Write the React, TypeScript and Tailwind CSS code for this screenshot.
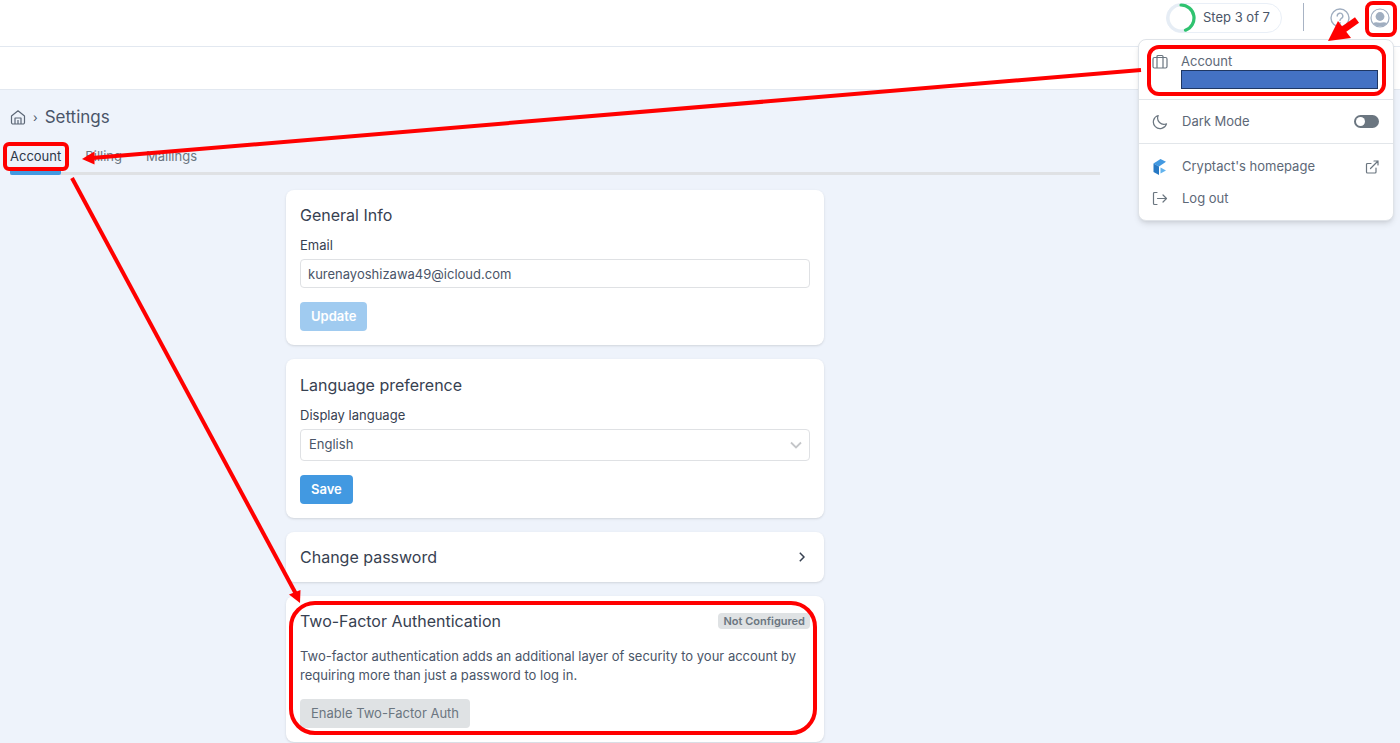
import type { ReactNode } from "react"

export default function App() {
  return (
    <div className="relative min-h-screen overflow-hidden bg-[#eef3fb] font-['Inter','Liberation_Sans',sans-serif] text-[13px] text-[#4a5568]">
      <Header />
      <main className="pt-4 pr-[300px] pl-2.5">
        <Breadcrumb />
        <Tabs />
        <div className="mx-auto mt-[15px] flex max-w-[538px] flex-col gap-3.5">
          <GeneralInfo />
          <LanguagePreference />
          <ChangePassword />
          <TwoFactor />
        </div>
      </main>
      <Arrows />
    </div>
  )
}

function Highlight({ className }: { className: string }) {
  return <span className={`pointer-events-none absolute z-20 border-4 border-[#ff0000] ${className}`} />
}

function Header() {
  return (
    <header>
      <div className="relative flex h-[47px] items-start justify-end border-b border-[#e2e8f0] bg-white pr-[3px]">
        <div className="mt-[3px] flex h-[30px] w-[116px] items-center rounded-full border border-[#e9eff7]">
          <svg className="-ml-px size-[30px]" viewBox="0 0 30 30" fill="none" strokeWidth="3.2">
            <circle cx="15" cy="15" r="13" stroke="#e6edf5" />
            <path d="M15 2a13 13 0 0 1 4.500 25.200" stroke="#2fc36f" strokeLinecap="round" />
          </svg>
          <span className="ml-[7px]">Step 3 of 7</span>
        </div>
        <span className="mt-[3px] ml-[21px] h-7 w-px bg-[#a8b3c4]" />
        <button type="button" aria-label="Help" className="mt-2 ml-[26px]">
          <svg className="size-5" viewBox="0 0 20 20" fill="none" stroke="#a0aec0" strokeWidth="1.4" strokeLinecap="round">
            <circle cx="10" cy="10" r="9" />
            <path d="M7.2 8a2.8 2.8 0 1 1 4.2 2.4c-1 .6-1.4 1-1.4 2" />
            <path d="M10 14.8v.1" strokeWidth="1.8" />
          </svg>
        </button>
        <button type="button" aria-label="User menu" className="relative mt-2 mr-[7px] ml-5">
          <svg className="size-5" viewBox="0 0 20 20">
            <circle cx="10" cy="10" r="9" fill="none" stroke="#a0aec0" strokeWidth="1.2" />
            <circle cx="10" cy="8.5" r="4.4" fill="#a0aec0" />
            <path d="M3 15.3c2-1.5 4-1 7-.6 3-.4 5-.9 7 .6-1.7 2.2-4 3.3-7 3.3s-5.3-1.1-7-3.3z" fill="#a0aec0" />
          </svg>
          <Highlight className="-top-[7px] -right-[7px] -bottom-[9px] -left-[5px] rounded-lg" />
        </button>
        <UserMenu />
      </div>
      <div className="h-[43px] border-b border-[#e2e8f0] bg-white" />
    </header>
  )
}

function UserMenu() {
  return (
    <div className="absolute top-[39px] right-1.5 z-10 w-[256px] rounded-lg border border-[#dfe3e8] bg-white text-[#5d6877] shadow-md">
      <div className="relative flex h-[60px] items-start border-b border-[#e2e6ea] pt-3 pr-[15px] pl-[13px]">
        <BriefcaseIcon />
        <div className="ml-[13px] flex-1">
          <a href="#account" className="block leading-[18px]">Account</a>
          <div className="h-[19px] border border-[#1f3763] bg-[#4472c4]" />
        </div>
        <Highlight className="top-[5px] right-[7px] bottom-[3px] left-2 rounded-xl" />
      </div>
      <div className="flex h-11 items-center border-b border-[#e2e6ea] pr-3.5 pl-[13px]">
        <svg className="size-4" viewBox="0 0 16 16" fill="none" stroke="#6b7680" strokeWidth="1.2" strokeLinejoin="round">
          <path d="M6.2 1.5a6.700 6.700 0 1 0 8.300 8.300A6.300 6.300 0 0 1 6.200 1.500z" />
        </svg>
        <label htmlFor="dark-mode" className="ml-3.5 flex-1">Dark Mode</label>
        <input
          id="dark-mode"
          type="checkbox"
          role="switch"
          className="h-[13px] w-[25px] appearance-none rounded-full border-2 border-[#6b7680] bg-[#6b7680] before:block before:size-[9px] before:rounded-full before:bg-white before:content-['']"
        />
      </div>
      <div className="pt-[7px] pb-[5px]">
        <a href="#homepage" className="flex h-8 items-center pr-3.5 pl-[13px]">
          <svg className="size-4" viewBox="0 0 16 16">
            <path d="M1.500 4.500 8.500 0l5.500 2.800-7 4.700z" fill="#4299e1" />
            <path d="M1.500 4.500 7 7.500V16l-5.500-3z" fill="#2779c4" />
            <path d="m8.500 8.500 5.500 3-5.500 3z" fill="#63b3ed" />
          </svg>
          <span className="ml-3.5 flex-1">Cryptact's homepage</span>
          <svg className="size-[14px]" viewBox="0 0 14 14" fill="none" stroke="#6b7680" strokeWidth="1.2" strokeLinecap="round" strokeLinejoin="round">
            <path d="M6 3.500H2.500a1 1 0 0 0-1 1V12a1 1 0 0 0 1 1H10a1 1 0 0 0 1-1V8M9 1h4v4M13 1 5.500 8.500" />
          </svg>
        </a>
        <a href="#logout" className="flex h-8 items-center pr-3.5 pl-[13px]">
          <svg className="size-4" viewBox="0 0 16 16" fill="none" stroke="#6b7680" strokeWidth="1.2" strokeLinecap="round" strokeLinejoin="round">
            <path d="M5 1.500H2.500a1 1 0 0 0-1 1v10a1 1 0 0 0 1 1H5M5.500 7.500H14.500M11 4l3.500 3.500L11 11" />
          </svg>
          <span className="ml-3.5">Log out</span>
        </a>
      </div>
    </div>
  )
}

function BriefcaseIcon() {
  return (
    <svg className="mt-0.5 size-4" viewBox="0 0 16 16" fill="none" stroke="#6b7680" strokeWidth="1.2" strokeLinejoin="round">
      <rect x="1" y="3.5" width="14" height="10.5" rx="1.5" />
      <path d="M5 14V2.500a1 1 0 0 1 1-1h4a1 1 0 0 1 1 1V14" />
    </svg>
  )
}

function Breadcrumb() {
  return (
    <nav aria-label="Breadcrumb" className="flex h-6 items-center">
      <a href="#home" aria-label="Home">
        <svg className="size-4" viewBox="0 0 16 16" fill="none" stroke="#5d6877" strokeWidth="1.2" strokeLinejoin="round">
          <path d="M1.500 6 8 .8 14.500 6v6.500A1.500 1.500 0 0 1 13 14H3a1.500 1.500 0 0 1-1.500-1.500z" />
          <path d="M5 14V8h6v6M8 10v4" />
        </svg>
      </a>
      <span className="mx-[7px] text-xs">›</span>
      <h1 className="text-[17px]">Settings</h1>
    </nav>
  )
}

function Tabs() {
  return (
    <nav className="mt-3 flex h-[33px] items-stretch gap-6 border-b-3 border-[#dfe1e4] text-[#6b7680]">
      <a href="#account" className="relative -mb-[3px] flex items-center rounded-b-xs border-b-4 border-[#4299e1] text-[#2d3748]">
        Account
        <Highlight className="top-0 -right-2 bottom-0 -left-[7px] rounded-md" />
      </a>
      <a href="#billing" className="flex items-center">Billing</a>
      <a href="#mailings" className="flex items-center">Mailings</a>
    </nav>
  )
}

function Card({ children }: { children: ReactNode }) {
  return <section className="relative rounded-lg bg-white px-3.5 shadow-sm">{children}</section>
}

function CardTitle({ children }: { children: ReactNode }) {
  return <h2 className="text-base leading-6 text-[#374151]">{children}</h2>
}

function GeneralInfo() {
  return (
    <Card>
      <div className="pt-[13px] pb-3.5">
        <CardTitle>General Info</CardTitle>
        <label htmlFor="email" className="mt-2 mb-1 block leading-5 text-[#374151]">Email</label>
        <input
          id="email"
          type="email"
          defaultValue="kurenayoshizawa49@icloud.com"
          className="block h-[29px] w-full rounded-sm border border-[#dfe1e4] px-[7px]"
        />
        <button type="button" className="mt-3.5 h-[29px] rounded-sm bg-[#a0cbf0] px-[11px] font-semibold text-white">
          Update
        </button>
      </div>
    </Card>
  )
}

function LanguagePreference() {
  return (
    <Card>
      <div className="py-3.5">
        <CardTitle>Language preference</CardTitle>
        <label htmlFor="language" className="mt-2 mb-1 block leading-5 text-[#374151]">Display language</label>
        <div className="relative">
          <select id="language" className="block h-8 w-full appearance-none rounded-sm border border-[#dfe1e4] px-2">
            <option>English</option>
          </select>
          <svg className="pointer-events-none absolute top-3 right-2 h-2 w-3" viewBox="0 0 12 8" fill="none" stroke="#c4c6c9" strokeWidth="1.8">
            <path d="m1 1.500 5 5 5-5" />
          </svg>
        </div>
        <button type="button" className="mt-3.5 h-[29px] rounded-sm bg-[#4299e1] px-[11px] font-semibold text-white">
          Save
        </button>
      </div>
    </Card>
  )
}

function ChangePassword() {
  return (
    <Card>
      <button type="button" className="flex h-[50px] w-full items-center justify-between pr-[5px]">
        <CardTitle>Change password</CardTitle>
        <svg className="h-2.5 w-1.5" viewBox="0 0 6 10" fill="none" stroke="#374151" strokeWidth="1.5">
          <path d="m.8.8 4.200 4.200L.8 9.200" />
        </svg>
      </button>
    </Card>
  )
}

function TwoFactor() {
  return (
    <Card>
      <div className="pt-[13px] pb-3.5">
        <div className="flex items-center justify-between">
          <CardTitle>Two-Factor Authentication</CardTitle>
          <span className="rounded-sm bg-[#dfe2e4] px-[5px] text-[11px] leading-4 font-semibold text-[#6b7680]">
            Not Configured
          </span>
        </div>
        <p className="mt-3.5 max-w-[500px] leading-[19px]">
          Two-factor authentication adds an additional layer of security to your account by requiring more than just a
          password to log in.
        </p>
        <button type="button" className="mt-3.5 h-[29px] rounded-sm bg-[#dfe2e4] px-[11px] text-[#6b7680]">
          Enable Two-Factor Auth
        </button>
      </div>
      <Highlight className="top-[5px] right-[7px] bottom-[7px] left-[3px] rounded-[26px]" />
    </Card>
  )
}

function Arrows() {
  return (
    <svg className="pointer-events-none absolute top-0 left-0 z-30 h-[743px] w-[1400px]" fill="#ff0000" stroke="#ff0000">
      <path d="M1141 70 92 158" strokeWidth="4" />
      <path d="M82 159 94.500 151.500v13z" stroke="none" />
      <path d="M72 178 296 594" strokeWidth="4" />
      <path d="M300 603 289 594.500 300.500 590z" stroke="none" />
      <path d="M1357 20 1340 32" strokeWidth="7" />
      <path d="M1328 41 1338 21 1351 38z" stroke="none" />
    </svg>
  )
}
